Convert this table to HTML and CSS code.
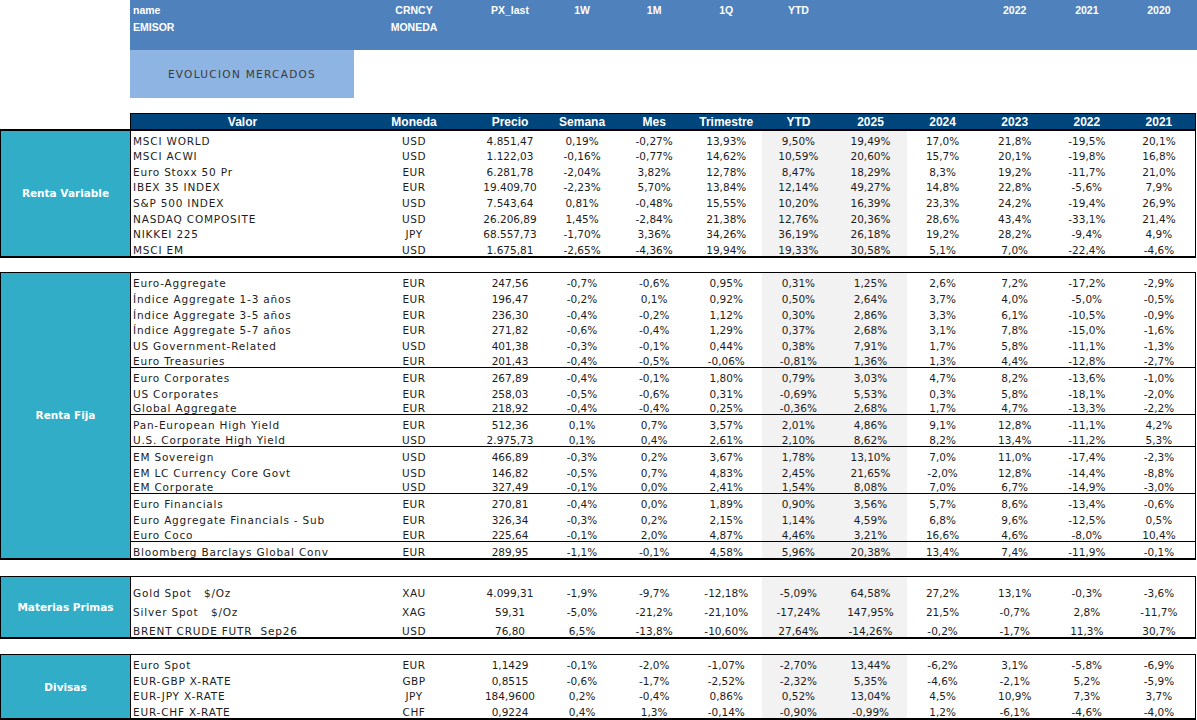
FILE: index.html
```html
<!DOCTYPE html>
<html lang="es">
<head>
<meta charset="utf-8">
<title>Evolución mercados</title>
<link rel="stylesheet" href="styles.css">
</head>
<body>
<div class="sheet">
  <div class="banner">
    <div class="brow"><span class="c-name">name</span><span>CRNCY</span><span>PX_last</span><span>1W</span><span>1M</span><span>1Q</span><span>YTD</span><span></span><span></span><span>2022</span><span>2021</span><span>2020</span></div>
    <div class="brow"><span class="c-name">EMISOR</span><span>MONEDA</span></div>
    <div class="brow brow-last"></div>
  </div>
  <div class="evol">EVOLUCION MERCADOS</div>

  <div class="thead">
    <div class="thead-grid">
      <span>Valor</span><span>Moneda</span><span>Precio</span><span>Semana</span><span>Mes</span><span>Trimestre</span><span>YTD</span><span>2025</span><span>2024</span><span>2023</span><span>2022</span><span>2021</span>
    </div>
  </div>

  <section class="group g-rv">
    <div class="label">Renta Variable</div>
    <div class="rows">
      <div class="row"><span>MSCI WORLD</span><span>USD</span><span>4.851,47</span><span>0,19%</span><span>-0,27%</span><span>13,93%</span><span>9,50%</span><span>19,49%</span><span>17,0%</span><span>21,8%</span><span>-19,5%</span><span>20,1%</span></div>
      <div class="row"><span>MSCI ACWI</span><span>USD</span><span>1.122,03</span><span>-0,16%</span><span>-0,77%</span><span>14,62%</span><span>10,59%</span><span>20,60%</span><span>15,7%</span><span>20,1%</span><span>-19,8%</span><span>16,8%</span></div>
      <div class="row"><span>Euro Stoxx 50 Pr</span><span>EUR</span><span>6.281,78</span><span>-2,04%</span><span>3,82%</span><span>12,78%</span><span>8,47%</span><span>18,29%</span><span>8,3%</span><span>19,2%</span><span>-11,7%</span><span>21,0%</span></div>
      <div class="row"><span>IBEX 35 INDEX</span><span>EUR</span><span>19.409,70</span><span>-2,23%</span><span>5,70%</span><span>13,84%</span><span>12,14%</span><span>49,27%</span><span>14,8%</span><span>22,8%</span><span>-5,6%</span><span>7,9%</span></div>
      <div class="row"><span>S&amp;P 500 INDEX</span><span>USD</span><span>7.543,64</span><span>0,81%</span><span>-0,48%</span><span>15,55%</span><span>10,20%</span><span>16,39%</span><span>23,3%</span><span>24,2%</span><span>-19,4%</span><span>26,9%</span></div>
      <div class="row"><span>NASDAQ COMPOSITE</span><span>USD</span><span>26.206,89</span><span>1,45%</span><span>-2,84%</span><span>21,38%</span><span>12,76%</span><span>20,36%</span><span>28,6%</span><span>43,4%</span><span>-33,1%</span><span>21,4%</span></div>
      <div class="row"><span>NIKKEI 225</span><span>JPY</span><span>68.557,73</span><span>-1,70%</span><span>3,36%</span><span>34,26%</span><span>36,19%</span><span>26,18%</span><span>19,2%</span><span>28,2%</span><span>-9,4%</span><span>4,9%</span></div>
      <div class="row"><span>MSCI EM</span><span>USD</span><span>1.675,81</span><span>-2,65%</span><span>-4,36%</span><span>19,94%</span><span>19,33%</span><span>30,58%</span><span>5,1%</span><span>7,0%</span><span>-22,4%</span><span>-4,6%</span></div>
    </div>
  </section>

  <section class="group g-rf top">
    <div class="label">Renta Fija</div>
    <div class="rows">
      <div class="row"><span>Euro-Aggregate</span><span>EUR</span><span>247,56</span><span>-0,7%</span><span>-0,6%</span><span>0,95%</span><span>0,31%</span><span>1,25%</span><span>2,6%</span><span>7,2%</span><span>-17,2%</span><span>-2,9%</span></div>
      <div class="row"><span>Índice Aggregate 1-3 años</span><span>EUR</span><span>196,47</span><span>-0,2%</span><span>0,1%</span><span>0,92%</span><span>0,50%</span><span>2,64%</span><span>3,7%</span><span>4,0%</span><span>-5,0%</span><span>-0,5%</span></div>
      <div class="row"><span>Índice Aggregate 3-5 años</span><span>EUR</span><span>236,30</span><span>-0,4%</span><span>-0,2%</span><span>1,12%</span><span>0,30%</span><span>2,86%</span><span>3,3%</span><span>6,1%</span><span>-10,5%</span><span>-0,9%</span></div>
      <div class="row"><span>Índice Aggregate 5-7 años</span><span>EUR</span><span>271,82</span><span>-0,6%</span><span>-0,4%</span><span>1,29%</span><span>0,37%</span><span>2,68%</span><span>3,1%</span><span>7,8%</span><span>-15,0%</span><span>-1,6%</span></div>
      <div class="row"><span>US Government-Related</span><span>USD</span><span>401,38</span><span>-0,3%</span><span>-0,1%</span><span>0,44%</span><span>0,38%</span><span>7,91%</span><span>1,7%</span><span>5,8%</span><span>-11,1%</span><span>-1,3%</span></div>
      <div class="row sep"><span>Euro Treasuries</span><span>EUR</span><span>201,43</span><span>-0,4%</span><span>-0,5%</span><span>-0,06%</span><span>-0,81%</span><span>1,36%</span><span>1,3%</span><span>4,4%</span><span>-12,8%</span><span>-2,7%</span></div>
      <div class="row"><span>Euro Corporates</span><span>EUR</span><span>267,89</span><span>-0,4%</span><span>-0,1%</span><span>1,80%</span><span>0,79%</span><span>3,03%</span><span>4,7%</span><span>8,2%</span><span>-13,6%</span><span>-1,0%</span></div>
      <div class="row"><span>US Corporates</span><span>EUR</span><span>258,03</span><span>-0,5%</span><span>-0,6%</span><span>0,31%</span><span>-0,69%</span><span>5,53%</span><span>0,3%</span><span>5,8%</span><span>-18,1%</span><span>-2,0%</span></div>
      <div class="row sep"><span>Global Aggregate</span><span>EUR</span><span>218,92</span><span>-0,4%</span><span>-0,4%</span><span>0,25%</span><span>-0,36%</span><span>2,68%</span><span>1,7%</span><span>4,7%</span><span>-13,3%</span><span>-2,2%</span></div>
      <div class="row"><span>Pan-European High Yield</span><span>EUR</span><span>512,36</span><span>0,1%</span><span>0,7%</span><span>3,57%</span><span>2,01%</span><span>4,86%</span><span>9,1%</span><span>12,8%</span><span>-11,1%</span><span>4,2%</span></div>
      <div class="row sep"><span>U.S. Corporate High Yield</span><span>USD</span><span>2.975,73</span><span>0,1%</span><span>0,4%</span><span>2,61%</span><span>2,10%</span><span>8,62%</span><span>8,2%</span><span>13,4%</span><span>-11,2%</span><span>5,3%</span></div>
      <div class="row"><span>EM Sovereign</span><span>USD</span><span>466,89</span><span>-0,3%</span><span>0,2%</span><span>3,67%</span><span>1,78%</span><span>13,10%</span><span>7,0%</span><span>11,0%</span><span>-17,4%</span><span>-2,3%</span></div>
      <div class="row"><span>EM LC Currency Core Govt</span><span>USD</span><span>146,82</span><span>-0,5%</span><span>0,7%</span><span>4,83%</span><span>2,45%</span><span>21,65%</span><span>-2,0%</span><span>12,8%</span><span>-14,4%</span><span>-8,8%</span></div>
      <div class="row sep"><span>EM Corporate</span><span>USD</span><span>327,49</span><span>-0,1%</span><span>0,0%</span><span>2,41%</span><span>1,54%</span><span>8,08%</span><span>7,0%</span><span>6,7%</span><span>-14,9%</span><span>-3,0%</span></div>
      <div class="row"><span>Euro Financials</span><span>EUR</span><span>270,81</span><span>-0,4%</span><span>0,0%</span><span>1,89%</span><span>0,90%</span><span>3,56%</span><span>5,7%</span><span>8,6%</span><span>-13,4%</span><span>-0,6%</span></div>
      <div class="row"><span>Euro Aggregate Financials - Sub</span><span>EUR</span><span>326,34</span><span>-0,3%</span><span>0,2%</span><span>2,15%</span><span>1,14%</span><span>4,59%</span><span>6,8%</span><span>9,6%</span><span>-12,5%</span><span>0,5%</span></div>
      <div class="row sep"><span>Euro Coco</span><span>EUR</span><span>225,64</span><span>-0,1%</span><span>2,0%</span><span>4,87%</span><span>4,46%</span><span>3,21%</span><span>16,6%</span><span>4,6%</span><span>-8,0%</span><span>10,4%</span></div>
      <div class="row"><span>Bloomberg Barclays Global Conv</span><span>EUR</span><span>289,95</span><span>-1,1%</span><span>-0,1%</span><span>4,58%</span><span>5,96%</span><span>20,38%</span><span>13,4%</span><span>7,4%</span><span>-11,9%</span><span>-0,1%</span></div>
    </div>
  </section>

  <section class="group g-mp top">
    <div class="label">Materias Primas</div>
    <div class="rows">
      <div class="row first"><span>Gold Spot   $/Oz</span><span>XAU</span><span>4.099,31</span><span>-1,9%</span><span>-9,7%</span><span>-12,18%</span><span>-5,09%</span><span>64,58%</span><span>27,2%</span><span>13,1%</span><span>-0,3%</span><span>-3,6%</span></div>
      <div class="row"><span>Silver Spot   $/Oz</span><span>XAG</span><span>59,31</span><span>-5,0%</span><span>-21,2%</span><span>-21,10%</span><span>-17,24%</span><span>147,95%</span><span>21,5%</span><span>-0,7%</span><span>2,8%</span><span>-11,7%</span></div>
      <div class="row"><span>BRENT CRUDE FUTR  Sep26</span><span>USD</span><span>76,80</span><span>6,5%</span><span>-13,8%</span><span>-10,60%</span><span>27,64%</span><span>-14,26%</span><span>-0,2%</span><span>-1,7%</span><span>11,3%</span><span>30,7%</span></div>
    </div>
  </section>

  <section class="group g-dv top">
    <div class="label">Divisas</div>
    <div class="rows">
      <div class="row"><span>Euro Spot</span><span>EUR</span><span>1,1429</span><span>-0,1%</span><span>-2,0%</span><span>-1,07%</span><span>-2,70%</span><span>13,44%</span><span>-6,2%</span><span>3,1%</span><span>-5,8%</span><span>-6,9%</span></div>
      <div class="row"><span>EUR-GBP X-RATE</span><span>GBP</span><span>0,8515</span><span>-0,6%</span><span>-1,7%</span><span>-2,52%</span><span>-2,32%</span><span>5,35%</span><span>-4,6%</span><span>-2,1%</span><span>5,2%</span><span>-5,9%</span></div>
      <div class="row"><span>EUR-JPY X-RATE</span><span>JPY</span><span>184,9600</span><span>0,2%</span><span>-0,4%</span><span>0,86%</span><span>0,52%</span><span>13,04%</span><span>4,5%</span><span>10,9%</span><span>7,3%</span><span>3,7%</span></div>
      <div class="row"><span>EUR-CHF X-RATE</span><span>CHF</span><span>0,9224</span><span>0,4%</span><span>1,3%</span><span>-0,14%</span><span>-0,90%</span><span>-0,99%</span><span>1,2%</span><span>-6,1%</span><span>-4,6%</span><span>-4,0%</span></div>
    </div>
  </section>
</div>
</body>
</html>
```

FILE: styles.css
```css
html, body {
  margin: 0;
  padding: 0;
  background: #ffffff;
}

body {
  font-family: "DejaVu Sans", "Liberation Sans", sans-serif;
  color: #1c1c1c;
  overflow: hidden;
}

.sheet {
  width: 1197px;
  height: 720px;
}

/* ---------- top banner ---------- */
.banner {
  margin-left: 130px;
  padding-left: 1px;
  height: 50px;
  background: #4f81bd;
}

.brow {
  display: grid;
  grid-template-columns: 223px 120px 72px repeat(9, 1fr);
  width: 1064px;
  height: 17px;
  box-sizing: border-box;
  padding-bottom: 1.5px;
  align-items: end;
  font-family: "Liberation Sans", sans-serif;
  font-weight: bold;
  font-size: 10.5px;
  line-height: 12px;
  color: #ffffff;
  text-align: center;
}

.brow .c-name {
  text-align: left;
  padding-left: 2px;
}

.brow-last {
  height: 16px;
}

/* ---------- title box ---------- */
.evol {
  margin-left: 130px;
  width: 224px;
  height: 48px;
  margin-bottom: 15px;
  background: #8db4e2;
  display: flex;
  align-items: center;
  justify-content: center;
  font-size: 10.5px;
  letter-spacing: 1.3px;
  color: #3a3a3a;
}

/* ---------- table header ---------- */
.thead {
  width: 1196px;
  box-sizing: border-box;
  padding-left: 130px;
  border-bottom: 2px solid #000;
}

.thead-grid {
  display: grid;
  grid-template-columns: 223px 120px 72px repeat(9, 1fr);
  height: 16px;
  box-sizing: border-box;
  padding-top: 1px;
  background: #00457c;
  border: 1px solid #000;
  border-bottom: 0;
  font-family: "Liberation Sans", sans-serif;
  font-weight: bold;
  font-size: 12px;
  line-height: 15px;
  color: #ffffff;
  text-align: center;
}

/* ---------- groups ---------- */
.group {
  display: flex;
  width: 1196px;
  box-sizing: border-box;
  border-left: 1px solid #000;
  border-right: 1px solid #000;
  border-bottom: 2px solid #000;
}

.group.top {
  border-top: 1px solid #000;
}

.label {
  width: 129px;
  flex: none;
  border-right: 1px solid #000;
  background: #31adc7;
  color: #ffffff;
  font-weight: bold;
  font-size: 10.5px;
  display: flex;
  align-items: center;
  justify-content: center;
}

.rows {
  flex: 1;
}

.row {
  display: grid;
  grid-template-columns: 223px 120px 72px repeat(9, 1fr);
  box-sizing: border-box;
  height: 15.75px;
  font-size: 10.5px;
}

.row > span {
  display: flex;
  align-items: flex-end;
  justify-content: center;
  line-height: 12px;
  white-space: pre;
}

.row > span:first-child {
  justify-content: flex-start;
  padding-left: 2px;
  letter-spacing: 0.8px;
}

.row > span:nth-child(2) {
  letter-spacing: 0.5px;
}

.row > span:nth-child(7),
.row > span:nth-child(8) {
  background: #f2f2f2;
}

.row.sep {
  border-bottom: 1px solid #000;
}

.g-rv .row {
  height: 15.6px;
}

.g-rf {
  margin-top: 14.5px;
}

.g-rf .row {
  height: 15.8px;
}

.g-mp {
  margin-top: 16px;
}

.g-mp .row {
  height: 19px;
}

.g-mp .row.first {
  height: 22px;
}

.g-dv {
  margin-top: 15.5px;
}

.g-dv .row {
  height: 15.75px;
}
```
